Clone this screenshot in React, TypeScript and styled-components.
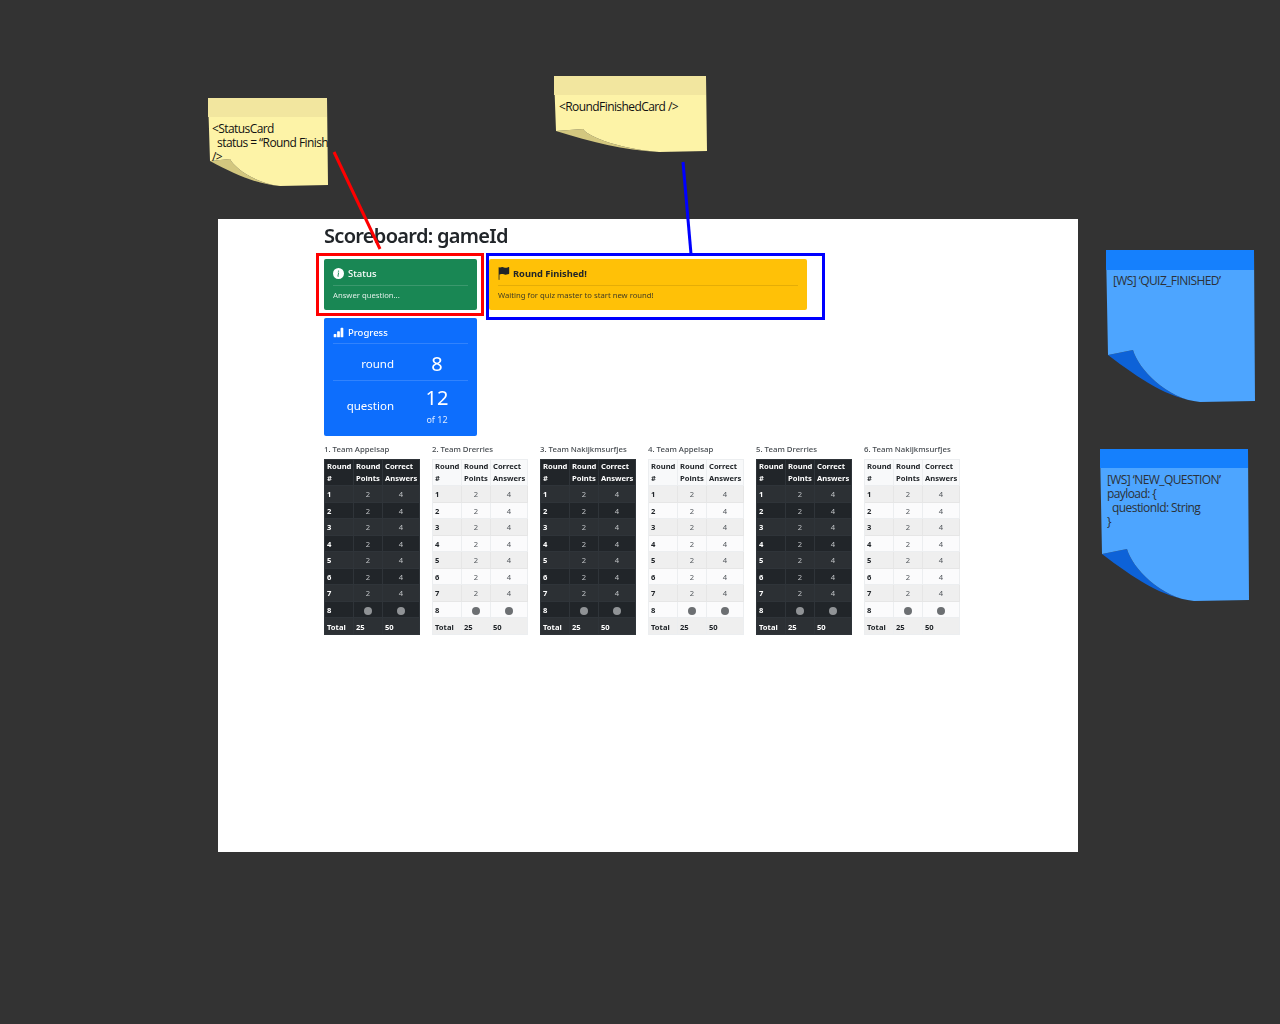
import React from "react";
import styled, { createGlobalStyle } from "styled-components";
import { BsBarChartFill, BsFlagFill, BsInfoCircleFill } from "react-icons/bs";

const GlobalStyle = createGlobalStyle`
  html, body {
    margin: 0;
    padding: 0;
    background: #333333;
  }
  * {
    box-sizing: border-box;
  }
`;

const Canvas = styled.div`
  position: relative;
  width: 1280px;
  height: 1024px;
  padding: 219px 202px 172px 218px;
  background: #333333;
  overflow: hidden;
  font-family: "Noto Sans", "Open Sans", sans-serif;
`;

const Frame = styled.main`
  width: 860px;
  height: 633px;
  padding: 4px 0 0 106px;
  background: #ffffff;
  color: #212529;
`;

// the screenshot on the board is a scaled down one, so its text is soft
const Soft = styled.div`
  filter: blur(0.3px);
`;

const Title = styled.h1`
  margin: 0 0 10px;
  height: 26px;
  font-size: 20px;
  line-height: 26px;
  font-weight: 600;
  letter-spacing: -0.7px;
`;

const CardRow = styled.div`
  display: flex;
  gap: 12px;
`;

const Card = styled.section<{ $bg: string; $fg: string; $width: number }>`
  width: ${({ $width }) => $width}px;
  padding: 8px 9px 0;
  border-radius: 2px;
  background: ${({ $bg }) => $bg};
  color: ${({ $fg }) => $fg};
`;

const StatusCard = styled(Card)`
  height: 51px;
`;

const ProgressCard = styled(Card)`
  height: 118px;
  margin-top: 8px;
`;

const CardHead = styled.div`
  display: flex;
  align-items: center;
  gap: 4px;
  height: 19px;
  padding-bottom: 5px;
  border-bottom: 1px solid rgba(0, 0, 0, 0.1);
  font-size: 9.5px;
  font-weight: 500;
  white-space: nowrap;

  svg {
    flex: none;
    width: 11px;
    height: 11px;
  }
`;

const BoldHead = styled(CardHead)`
  gap: 3px;
  font-size: 9.3px;
  font-weight: 700;

  svg {
    width: 13px;
    height: 13px;
    margin-left: -1px;
  }
`;

const LightHead = styled(CardHead)`
  border-bottom-color: rgba(255, 255, 255, 0.15);
`;

const ProgressHead = styled(LightHead)`
  height: 18px;
`;

const CardText = styled.p`
  margin: 4px 0 0;
  font-size: 7.7px;
  line-height: 10px;
  opacity: 0.85;
  white-space: nowrap;
`;

const Stat = styled.div<{ $height: number; $divider?: boolean }>`
  display: flex;
  align-items: center;
  height: ${({ $height }) => $height}px;
  padding-top: ${({ $divider }) => ($divider ? "3px" : "0")};
  border-bottom: ${({ $divider }) =>
    $divider ? "1px solid rgba(255, 255, 255, 0.15)" : "none"};
`;

const StatLabel = styled.div`
  flex: none;
  width: 61px;
  padding-bottom: 1px;
  font-size: 11.5px;
  text-align: right;
  white-space: nowrap;
`;

const StatValue = styled.div`
  flex: none;
  width: 86px;
  text-align: center;
  font-size: 20px;
  line-height: 24px;
`;

const StatNote = styled.div`
  font-size: 9px;
  line-height: 12px;
  margin-top: 4px;
  opacity: 0.85;
`;

const Teams = styled.div`
  display: flex;
  gap: 12px;
  margin-top: 8px;
`;

const Team = styled.div`
  width: 96px;
`;

const TeamName = styled.div`
  height: 15px;
  font-size: 7.8px;
  line-height: 10px;
  font-weight: 500;
  color: #454a4f;
  white-space: nowrap;
`;

const Table = styled.table<{ $dark?: boolean }>`
  width: 96px;
  table-layout: fixed;
  border-collapse: separate;
  border-spacing: 0;
  border-top: 1px solid ${({ $dark }) => ($dark ? "#2f3439" : "#eceef0")};
  border-left: 1px solid ${({ $dark }) => ($dark ? "#2f3439" : "#eceef0")};
  font-size: 7.6px;
  background: ${({ $dark }) => ($dark ? "#212529" : "#fbfbfc")};
  color: ${({ $dark }) => ($dark ? "#ffffff" : "#212529")};

  th,
  td {
    padding: 0 2px;
    border-right: 1px solid ${({ $dark }) => ($dark ? "#2f3439" : "#eceef0")};
    border-bottom: 1px solid ${({ $dark }) => ($dark ? "#2f3439" : "#eceef0")};
    overflow: hidden;
    white-space: nowrap;
  }

  thead th {
    height: 26px;
    padding-bottom: 1px;
    line-height: 12px;
    text-align: left;
    vertical-align: middle;
    font-weight: 700;
    background: ${({ $dark }) => ($dark ? "#212529" : "#f8f9fa")};
  }

  tbody th {
    height: 16.5px;
    padding-top: 1px;
    text-align: left;
    font-weight: 700;
  }

  tbody td {
    padding-top: 1px;
    text-align: center;
    color: ${({ $dark }) => ($dark ? "#c0c3c6" : "#50555a")};
  }

  tbody tr:nth-child(odd) th,
  tbody tr:nth-child(odd) td {
    background: ${({ $dark }) => ($dark ? "#2c3034" : "#efefef")};
    border-color: ${({ $dark }) => ($dark ? "#2f3439" : "#e6e6e6")};
  }

  tfoot th,
  tfoot td {
    height: 17px;
    padding-top: 1px;
    text-align: left;
    font-weight: 700;
    background: ${({ $dark }) => ($dark ? "#2c3034" : "#efefef")};
    color: ${({ $dark }) => ($dark ? "#ffffff" : "#212529")};
  }
`;

const FirstCol = styled.col`
  width: 29px;
`;

const MiddleCol = styled.col`
  width: 29px;
`;

const LastCol = styled.col`
  width: 37px;
`;

const Dot = styled.span<{ $dark?: boolean }>`
  display: inline-block;
  width: 8px;
  height: 8px;
  border-radius: 50%;
  vertical-align: middle;
  background: ${({ $dark }) => ($dark ? "#909396" : "#6c6f72")};
`;

const NoteBox = styled.aside<{
  $x: number;
  $y: number;
  $w: number;
  $h: number;
}>`
  position: absolute;
  left: ${({ $x }) => $x}px;
  top: ${({ $y }) => $y}px;
  width: ${({ $w }) => $w}px;
  height: ${({ $h }) => $h}px;
  overflow: hidden;

  svg {
    position: absolute;
    inset: 0;
  }
`;

const NoteText = styled.pre<{ $left: number; $color: string }>`
  position: absolute;
  left: ${({ $left }) => $left}px;
  top: 24px;
  margin: 0;
  font-family: "Open Sans", "Noto Sans", sans-serif;
  font-size: 12px;
  line-height: 14px;
  letter-spacing: -0.58px;
  color: ${({ $color }) => $color};
`;

const Highlight = styled.div<{
  $x: number;
  $y: number;
  $w: number;
  $h: number;
  $color: string;
}>`
  position: absolute;
  left: ${({ $x }) => $x}px;
  top: ${({ $y }) => $y}px;
  width: ${({ $w }) => $w}px;
  height: ${({ $h }) => $h}px;
  border: 3px solid ${({ $color }) => $color};
`;

const Connectors = styled.svg`
  position: absolute;
  left: 0;
  top: 0;
`;

const yellow = { band: "#f2e69f", body: "#fdf3a7", fold: "#d3c77f", text: "#111111" };
const blue = { band: "#1580fd", body: "#4da5ff", fold: "#0d62d8", text: "#2b3138" };

const notes = [
  {
    x: 208, y: 98, w: 120, h: 88, band: 19, foldY: 63, tipX: 22, tipY: 61, endX: 72,
    colors: yellow, textLeft: 4,
    text: "<StatusCard\n  status = “Round Finished”\n/>",
  },
  {
    x: 554, y: 76, w: 153, h: 76, band: 19, foldY: 55, tipX: 29, tipY: 53, endX: 105,
    colors: yellow, textLeft: 5,
    text: "<RoundFinishedCard />",
  },
  {
    x: 1106, y: 250, w: 149, h: 152, band: 20, foldY: 105, tipX: 27, tipY: 100, endX: 94,
    colors: blue, textLeft: 7,
    text: "[WS] ‘QUIZ_FINISHED’",
  },
  {
    x: 1100, y: 449, w: 149, h: 152, band: 19, foldY: 105, tipX: 27, tipY: 100, endX: 94,
    colors: blue, textLeft: 7,
    text: "[WS] ‘NEW_QUESTION’\npayload: {\n  questionId: String\n}",
  },
];

type NoteProps = (typeof notes)[number];

const Note = ({ x, y, w, h, band, foldY, tipX, tipY, endX, colors, text, textLeft }: NoteProps) => {
  const left = 2;
  const spanX = endX - left;
  const spanY = h - foldY;
  // control points of the curled corner's inner edge, tip to bottom edge
  const c1 = `${tipX + 5} ${tipY + 0.35 * (h - tipY)}`;
  const c2 = `${tipX + 0.5 * (endX - tipX)} ${h - 3}`;
  const sheet = `M0 0 H${w - 1} L${w} ${h - 1} L${endX} ${h} C${c2} ${c1} ${tipX} ${tipY} L${left} ${foldY} Z`;
  const fold = `M${left} ${foldY} L${tipX} ${tipY} C${c1} ${c2} ${endX} ${h}
    C${endX - 0.35 * spanX} ${h - 0.08 * spanY} ${left + 0.35 * spanX} ${foldY + 0.52 * spanY} ${left} ${foldY} Z`;
  return (
    <NoteBox $x={x} $y={y} $w={w} $h={h}>
      <svg width={w} height={h} viewBox={`0 0 ${w} ${h}`}>
        <path d={fold} fill={colors.fold} />
        <path d={sheet} fill={colors.body} />
        <path d={`M0 0 H${w - 1} V${band} H0 Z`} fill={colors.band} />
      </svg>
      <NoteText $left={textLeft} $color={colors.text}>
        {text}
      </NoteText>
    </NoteBox>
  );
};

const teams = [
  "1. Team Appelsap",
  "2. Team Drerries",
  "3. Team Nakijkmsurfjes",
  "4. Team Appelsap",
  "5. Team Drerries",
  "6. Team Nakijkmsurfjes",
];

const rounds = [1, 2, 3, 4, 5, 6, 7];

const ScoreTable = ({ dark }: { dark: boolean }) => (
  <Table $dark={dark}>
    <colgroup>
      <FirstCol />
      <MiddleCol />
      <LastCol />
    </colgroup>
    <thead>
      <tr>
        <th>
          Round
          <br />#
        </th>
        <th>
          Round
          <br />
          Points
        </th>
        <th>
          Correct
          <br />
          Answers
        </th>
      </tr>
    </thead>
    <tbody>
      {rounds.map((round) => (
        <tr key={round}>
          <th>{round}</th>
          <td>2</td>
          <td>4</td>
        </tr>
      ))}
      <tr>
        <th>8</th>
        <td>
          <Dot $dark={dark} />
        </td>
        <td>
          <Dot $dark={dark} />
        </td>
      </tr>
    </tbody>
    <tfoot>
      <tr>
        <th>Total</th>
        <td>25</td>
        <td>50</td>
      </tr>
    </tfoot>
  </Table>
);

export default function App() {
  return (
    <Canvas>
      <GlobalStyle />
      <Frame>
        <Soft>
          <Title>Scoreboard: gameId</Title>
          <CardRow>
            <StatusCard $bg="#198754" $fg="#ffffff" $width={153}>
              <LightHead>
                <BsInfoCircleFill />
                Status
              </LightHead>
              <CardText>Answer question...</CardText>
            </StatusCard>
            <StatusCard $bg="#ffc107" $fg="#212529" $width={318}>
              <BoldHead>
                <BsFlagFill />
                Round Finished!
              </BoldHead>
              <CardText>Waiting for quiz master to start new round!</CardText>
            </StatusCard>
          </CardRow>
          <ProgressCard $bg="#0d6efd" $fg="#ffffff" $width={153}>
            <ProgressHead>
              <BsBarChartFill />
              Progress
            </ProgressHead>
            <Stat $height={37} $divider>
              <StatLabel>round</StatLabel>
              <StatValue>8</StatValue>
            </Stat>
            <Stat $height={50}>
              <StatLabel>question</StatLabel>
              <StatValue>
                12
                <StatNote>of 12</StatNote>
              </StatValue>
            </Stat>
          </ProgressCard>
          <Teams>
            {teams.map((name, index) => (
              <Team key={index}>
                <TeamName>{name}</TeamName>
                <ScoreTable dark={index % 2 === 0} />
              </Team>
            ))}
          </Teams>
        </Soft>
      </Frame>
      {notes.map((note) => (
        <Note key={note.text} {...note} />
      ))}
      <Highlight $x={316} $y={253} $w={168} $h={63} $color="#ff0000" />
      <Highlight $x={486} $y={253} $w={339} $h={67} $color="#0000ff" />
      <Connectors width={1280} height={1024}>
        <line x1={334} y1={152} x2={380} y2={249} stroke="#ff0000" strokeWidth={3} />
        <line x1={683} y1={162} x2={691} y2={254} stroke="#0000ff" strokeWidth={3} />
      </Connectors>
    </Canvas>
  );
}
